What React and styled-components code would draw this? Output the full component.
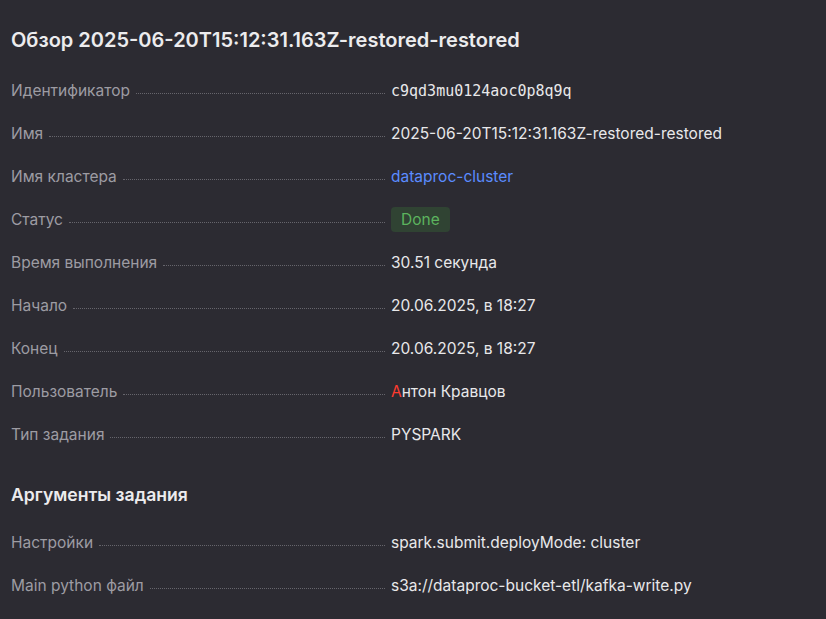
import React from 'react';
import styled, { createGlobalStyle } from 'styled-components';

const GlobalStyle = createGlobalStyle`
    html, body {
        margin: 0;
        padding: 0;
        background: #2c2b32;
    }
    body {
        font-family: Inter, "Noto Sans", sans-serif;
        color: #e8e8ea;
    }
`;

const Page = styled.div`
    width: 826px;
    height: 619px;
    padding: 26px 11px 0;
    box-sizing: border-box;
    background: #2c2b32;
    overflow: hidden;
`;

const Title = styled.h1`
    margin: 0;
    font-size: 20px;
    line-height: 28px;
    font-weight: 600;
    color: #ececee;
`;

const SectionTitle = styled.h2`
    margin: 27px 0 0;
    font-size: 17.6px;
    line-height: 24px;
    font-weight: 600;
    color: #ececee;
`;

const List = styled.div`
    display: flex;
    flex-direction: column;
    margin-top: ${(p) => p.$top}px;
`;

const Row = styled.div`
    display: grid;
    grid-template-columns: 380px 1fr;
    align-items: center;
    height: 43px;
`;

const LabelCell = styled.div`
    display: flex;
    align-items: baseline;
    padding-right: 6px;
    font-size: 15.5px;
    color: #9d9ca3;
`;

const Dots = styled.span`
    flex: 1;
    margin-left: 6px;
    border-bottom: 1px dotted #66656c;
    transform: translateY(-2px);
`;

const Value = styled.div`
    color: ${(p) => (p.$link ? '#5b8cff' : '#e8e8ea')};
    font-family: ${(p) => (p.$mono ? '"DejaVu Sans Mono", monospace' : 'inherit')};
    font-size: ${(p) => (p.$mono ? '15px' : '15.5px')};
`;

const Badge = styled.span`
    display: inline-flex;
    align-items: center;
    height: 25px;
    padding: 0 10px;
    border-radius: 4px;
    background: #304333;
    color: #5cb45e;
    font-size: 15.5px;
`;

const Red = styled.span`
    color: #ff3b2f;
`;

const Item = ({ label, children }) => (
    <Row>
        <LabelCell>
            {label}
            <Dots />
        </LabelCell>
        {children}
    </Row>
);

const App = () => (
    <Page>
        <GlobalStyle />
        <Title>Обзор 2025-06-20T15:12:31.163Z-restored-restored</Title>
        <List $top={15}>
            <Item label="Идентификатор"><Value $mono>c9qd3mu0124aoc0p8q9q</Value></Item>
            <Item label="Имя"><Value>2025-06-20T15:12:31.163Z-restored-restored</Value></Item>
            <Item label="Имя кластера"><Value $link>dataproc-cluster</Value></Item>
            <Item label="Статус"><div><Badge>Done</Badge></div></Item>
            <Item label="Время выполнения"><Value>30.51 секунда</Value></Item>
            <Item label="Начало"><Value>20.06.2025, в 18:27</Value></Item>
            <Item label="Конец"><Value>20.06.2025, в 18:27</Value></Item>
            <Item label="Пользователь"><Value><Red>А</Red>нтон Кравцов</Value></Item>
            <Item label="Тип задания"><Value>PYSPARK</Value></Item>
        </List>
        <SectionTitle>Аргументы задания</SectionTitle>
        <List $top={14}>
            <Item label="Настройки"><Value>spark.submit.deployMode: cluster</Value></Item>
            <Item label="Main python файл"><Value>s3a://dataproc-bucket-etl/kafka-write.py</Value></Item>
        </List>
    </Page>
);

export default App;
